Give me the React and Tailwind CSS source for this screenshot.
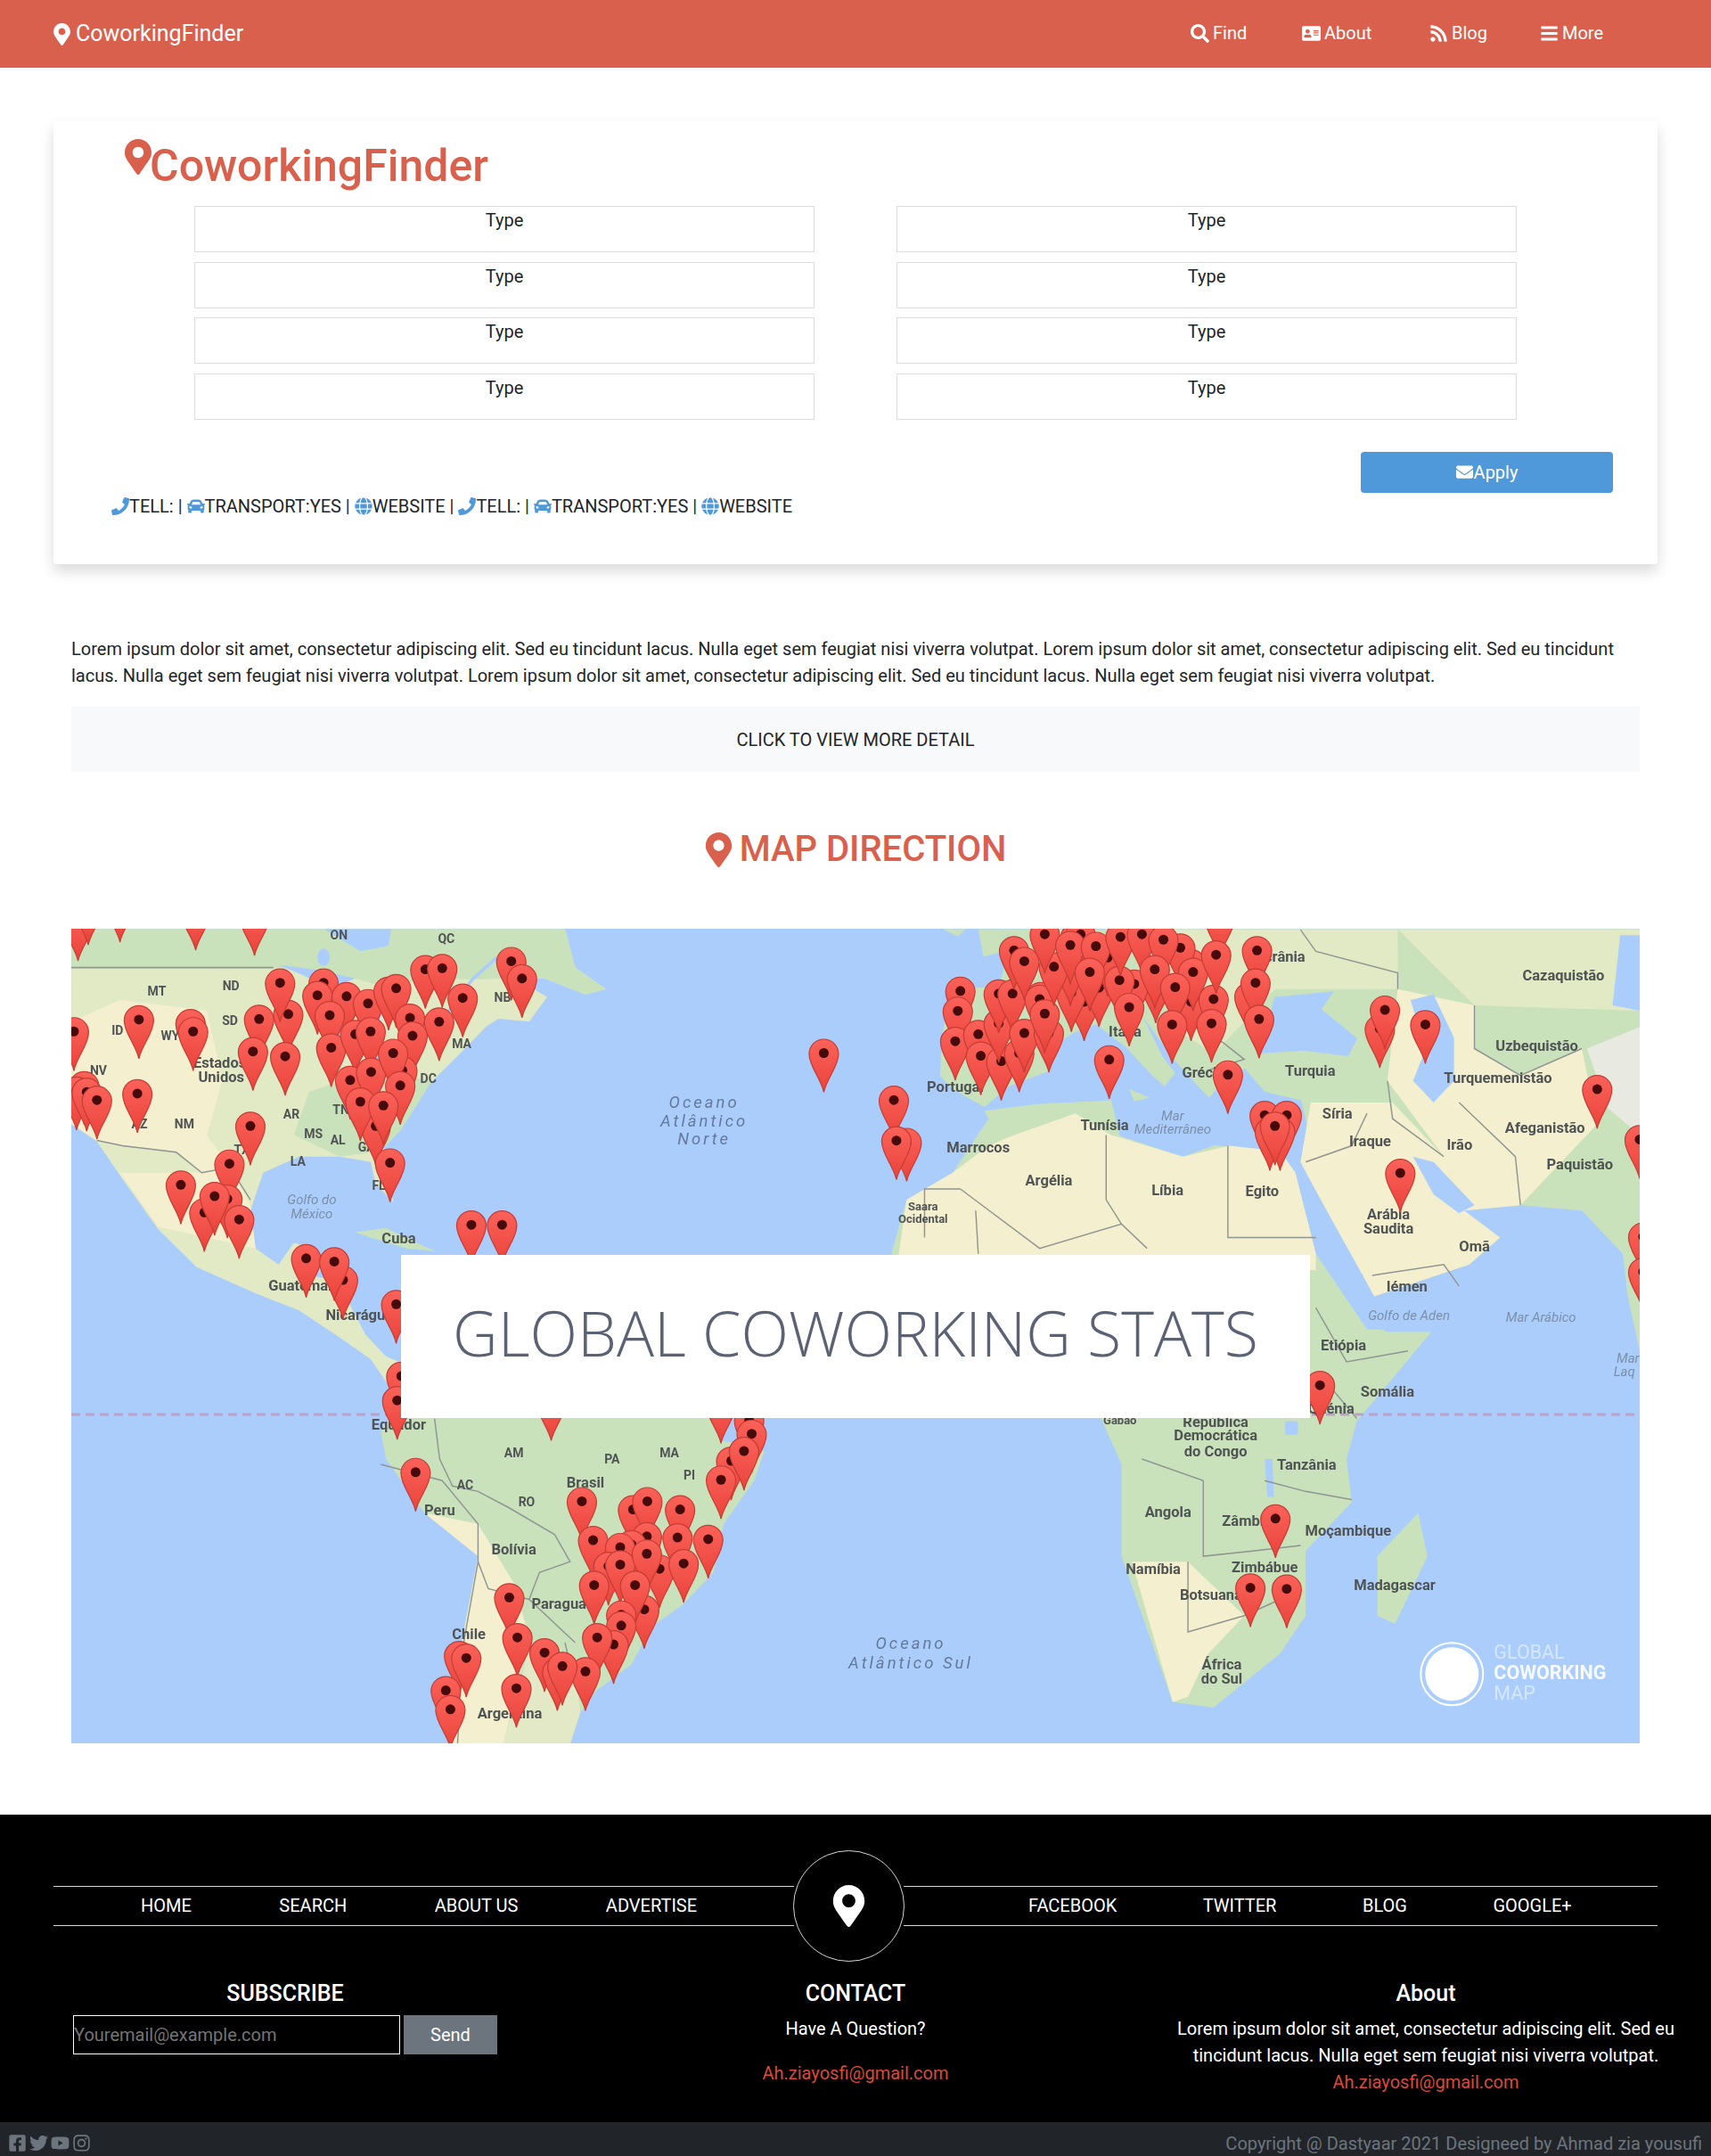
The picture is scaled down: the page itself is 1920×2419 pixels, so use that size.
import {
  FaMapMarkerAlt,
  FaSearch,
  FaAddressCard,
  FaRss,
  FaBars,
  FaEnvelope,
  FaPhone,
  FaCar,
  FaGlobe,
  FaFacebookSquare,
  FaTwitter,
  FaYoutube,
  FaInstagram,
} from "react-icons/fa";

const LOREM =
  "Lorem ipsum dolor sit amet, consectetur adipiscing elit. Sed eu tincidunt lacus. Nulla eget sem feugiat nisi viverra volutpat.";

// map drawing is authored in crop coordinates, two halves
const SX = 0.574;
const SY = 0.606;
const lx = (z) => z * SX - 20;
const rx = (z) => z * SX + 880;
const my = (z) => z * SY - 11;

const WATER = "#abcdfc";
const GREEN = "#c9e2bb";
const PALE = "#e1eac4";
const TAN = "#f4efcf";

const leftPins = [
  [48, 7], [68, -23], [130, -28], [278, -13], [393, -3], [167, 188], [268, 195], [273, 210], [40, 210], [402, 187],
  [459, 178], [443, 120], [528, 120], [516, 143], [573, 145], [540, 180], [615, 158], [655, 135], [670, 130], [697, 185],
  [702, 218], [754, 192], [800, 148], [727, 95], [760, 93], [895, 80], [916, 112], [390, 247], [453, 256], [543, 240],
  [590, 215], [620, 210], [580, 300], [621, 285], [682, 282], [664, 250], [630, 385], [600, 340], [678, 310], [645, 347],
  [60, 310], [45, 320], [65, 322], [85, 337], [164, 325], [385, 385], [658, 453], [344, 455], [249, 494], [295, 545],
  [340, 520], [315, 515], [363, 558], [494, 630], [566, 670], [549, 636], [670, 715], [680, 848], [672, 893], [817, 568],
  [877, 568], [973, 895], [1305, 900], [1360, 930], [1365, 955], [1325, 1005], [1350, 987], [1305, 1040], [708, 1026],
  [1033, 1080], [1133, 1095], [1161, 1080], [1225, 1095], [1055, 1152], [1220, 1147], [1280, 1150], [1160, 1145],
  [1130, 1160], [1108, 1165], [1085, 1200], [1108, 1197], [1185, 1205], [1160, 1177], [1232, 1195], [1155, 1280],
  [1137, 1235], [1057, 1235], [1110, 1290], [1110, 1310], [891, 1258], [1095, 1345], [1063, 1332], [907, 1332],
  [960, 1360], [1040, 1395], [985, 1395], [995, 1385], [793, 1365], [807, 1370], [767, 1430], [776, 1465], [905, 1426],
  [1506, 250],
];

const rightPins = [
  [656, 155], [587, 122], [447, 155], [476, 129], [545, 122], [362, 145], [430, 35], [493, 73], [656, 84],
  [75, 337], [100, 415], [80, 412], [205, 135], [200, 172], [195, 228], [240, 215], [245, 255], [285, 265], [280, 195],
  [280, 140], [307, 140], [320, 250], [330, 213], [378, 213], [360, 150], [370, 177], [422, 138], [310, 60], [330, 80],
  [420, 90], [388, 90], [370, 30], [440, 30], [420, 50], [470, 52], [458, 100], [516, 115], [518, 35], [560, 30],
  [635, 55], [602, 40], [585, 95], [660, 100], [625, 128], [770, 145], [700, 150], [712, 0], [705, 68], [785, 60],
  [782, 120], [535, 165], [619, 197], [696, 195], [789, 187], [496, 262], [728, 290], [800, 365], [843, 365], [810, 395],
  [830, 395], [820, 385], [1025, 205], [1035, 170], [1114, 197], [1065, 472], [1450, 317], [1533, 410], [1540, 590],
  [1540, 655], [908, 865], [821, 1112], [772, 1240], [843, 1242],
];

const leftLabels = [
  ["ON", 558, 38], ["QC", 768, 44], ["MT", 202, 142], ["ND", 347, 132], ["SD", 345, 197], ["ID", 125, 215], ["WY", 228, 225],
  ["Estados", 325, 275], ["Unidos", 328, 302], ["NV", 88, 288], ["AZ", 168, 388], ["NM", 256, 388], ["AR", 465, 370],
  ["MS", 508, 406], ["AL", 556, 417], ["GA", 612, 430], ["LA", 478, 457], ["TX", 368, 435], ["TN", 562, 362], ["DC", 733, 304],
  ["FL", 636, 502], ["MA", 798, 240], ["NB", 878, 154], ["Cuba", 675, 600], ["Guatemala", 490, 688], ["Nicarágua", 598, 742],
  ["Equador", 675, 946], ["Peru", 755, 1104], ["Brasil", 1040, 1052], ["AM", 900, 996], ["PA", 1092, 1008], ["MA", 1204, 996],
  ["PI", 1243, 1038], ["AC", 805, 1056], ["RO", 925, 1088], ["Bolívia", 900, 1176], ["Paraguai", 992, 1278], ["Chile", 812, 1334],
  ["Argentina", 892, 1480],
];

const rightLabels = [
  ["Ucrânia", 830, 80], ["Cazaquistão", 1384, 114], ["Itália", 527, 218], ["Grécia", 680, 294], ["Turquia", 889, 290],
  ["Uzbequistão", 1332, 244], ["Turquemenistão", 1256, 303], ["Portugal", 195, 320], ["Tunísia", 487, 391], ["Síria", 942, 370],
  ["Iraque", 1006, 420], ["Irão", 1181, 427], ["Afeganistão", 1348, 396], ["Paquistão", 1416, 463], ["Marrocos", 240, 432],
  ["Argélia", 378, 494], ["Líbia", 610, 512], ["Egito", 795, 513], ["Arábia", 1042, 556], ["Saudita", 1042, 582], ["Omã", 1210, 615],
  ["Iémen", 1078, 690], ["Etiópia", 954, 798], ["Somália", 1040, 884], ["Quénia", 930, 916], ["República", 704, 941],
  ["Democrática", 704, 966], ["do Congo", 704, 995], ["Tanzânia", 882, 1020], ["Angola", 611, 1108], ["Zâmbia", 765, 1124],
  ["Moçambique", 963, 1142], ["Namíbia", 582, 1213], ["Zimbábue", 800, 1209], ["Botsuana", 695, 1260], ["Madagascar", 1054, 1243],
  ["África", 716, 1390], ["do Sul", 716, 1416],
];

const leftBorders = [
  "85,410 135,420 240,432 290,470 345,460 385,520",
  "745,925 755,1000 780,1050 830,1060 890,1090 980,1140 1010,1190 950,1210 930,1260 1020,1340",
  "640,1010 760,1040 830,1120 830,1190 850,1240 930,1260",
  "830,1190 800,1350 790,1527",
  "1000,1340 1020,1420",
];

const rightBorders = [
  "205,500 360,610 520,565 570,610",
  "135,590 135,500 205,500",
  "490,400 490,520 520,565",
  "728,420 728,590 900,590",
  "235,540 240,620",
  "870,20 900,60 1060,100 1060,130",
  "1210,160 1210,240 1300,290 1420,240",
  "1040,300 1050,370 1150,440",
  "1180,340 1290,440 1300,530",
  "1000,360 970,420 880,450",
  "1010,660 1150,640 1180,680",
  "560,1000 680,1040 680,1180 780,1170 870,1160",
  "650,1190 650,1320 760,1290 830,1260",
  "800,1040 880,1060 970,1075",
  "900,720 960,820 1080,800",
  "905,840 980,925",
  "650,190 720,230 760,260 690,280",
];

function Pin({ x, y }) {
  return (
    <g transform={`translate(${x} ${y})`}>
      <path d="M0 43C-3 28 -16.5 14 -16.5 0A16.5 16.5 0 0 1 16.5 0C16.5 14 3 28 0 43Z" fill="url(#pinFill)" stroke="#c43c34" strokeWidth="1.2" />
      <circle r="5.5" cx="0" cy="-1" fill="#470a0a" />
    </g>
  );
}

function WorldMap() {
  return (
    <svg viewBox="0 0 1760 914" className="block w-full h-[914px] blur-[0.7px]" fontFamily="Roboto, sans-serif">
      <defs>
        <linearGradient id="pinFill" x1="0" y1="0" x2="0" y2="1">
          <stop offset="0" stopColor="#fb6259" />
          <stop offset="1" stopColor="#e9433b" />
        </linearGradient>
      </defs>
      <rect width="1760" height="914" fill={WATER} />

      <g transform={`translate(-20 -11) scale(${SX} ${SY})`}>
        {/* north america */}
        <polygon
          fill={PALE}
          points="35,19 1000,19 1020,90 1080,130 1040,140 960,110 905,110 965,145 930,190 870,185 845,200 790,254 719,320 674,393 640,430 665,525 630,490 620,450 560,440 480,440 410,470 385,540 395,610 440,640 470,600 510,610 500,660 555,670 610,770 650,810 700,830 700,925 620,815 560,775 480,725 400,695 280,645 205,575 130,475 85,412 35,380"
        />
        <polygon fill={GREEN} points="35,19 1000,19 1020,90 1080,130 1040,140 960,110 905,110 820,112 720,110 660,130 590,110 430,90 35,90" />
        <polygon fill={GREEN} points="560,440 640,430 680,390 740,300 620,280 500,320 470,400" />
        <polygon fill={TAN} points="35,190 130,150 300,170 330,300 300,400 345,460 290,470 240,432 135,420 85,410 35,380" />
        <polygon fill={TAN} points="290,470 345,460 385,530 395,610 300,590 205,570 130,470" />
        <polygon fill={WATER} points="85,420 195,575 130,480 95,430" />
        <polygon fill={GREEN} points="590,580 650,572 745,615 690,610 620,590" />
        <polygon fill={GREEN} points="760,625 830,640 850,650 770,640" />
        {/* lakes and hudson */}
        <polygon fill={WATER} points="530,19 660,19 655,50 600,60" />
        <polygon fill={WATER} points="440,85 520,95 590,110 540,130 490,105" />
        <polygon fill={WATER} points="545,150 570,160 565,240 545,230" />
        <polygon fill={WATER} points="590,150 640,180 630,230 600,210" />
        <polygon fill={WATER} points="610,250 680,222 690,232 630,265" />
        <polyline fill="none" stroke={WATER} strokeWidth="6" points="745,205 819,112 866,72" />
        <ellipse cx="528" cy="71" rx="12" ry="16" fill={WATER} />
        <line x1="35" y1="90" x2="430" y2="90" stroke="#8f9590" strokeWidth="3" />
        {/* south america */}
        <polygon fill={GREEN} points="700,880 1000,880 1290,925 1305,965 1390,985 1370,1040 1310,1120 1290,1210 1230,1270 1170,1310 1130,1380 1060,1430 1030,1470 1010,1527 770,1527 790,1380 830,1180 725,1100 650,1000 640,950 680,890" />
        <polygon fill={TAN} points="725,1100 830,1180 790,1380 770,1527 880,1527 930,1330 900,1230 830,1120" />
        <polygon fill="#e3e9c6" points="880,1527 930,1350 1020,1400 1030,1470 1010,1527" />
        {leftBorders.map((p) => (
          <polyline key={p} points={p} fill="none" stroke="#8f9590" strokeWidth="2.5" />
        ))}
      </g>

      <g transform={`translate(880 -11) scale(${SX} ${SY})`}>
        {/* eurasia */}
        <polygon
          fill={GREEN}
          points="300,19 291,89 280,125 190,130 170,210 165,290 190,315 252,348 300,310 377,282 370,245 424,212 470,195 528,237 580,290 604,310 625,285 600,255 563,183 622,260 660,300 691,331 720,300 761,277 800,320 871,336 888,402 870,450 1010,700 1200,640 1260,590 1190,540 1300,530 1420,540 1500,620 1510,700 1533,800 1533,19"
        />
        <polygon fill={PALE} points="620,19 1060,19 1060,130 960,130 820,130 700,250 620,200" />
        <polygon fill={PALE} points="1060,19 1533,19 1533,170 1210,160" />
        <polygon fill={TAN} points="890,340 1050,340 1150,440 1190,540 1260,590 1200,640 1010,700 870,450" />
        <polygon fill={TAN} points="1040,300 1060,130 1210,160 1210,240 1300,290 1420,240 1450,380 1300,530 1190,540 1150,440" />
        <polygon fill="#e8e9e0" points="1430,240 1533,200 1533,400 1470,350" />
        <polygon fill={GREEN} points="535,315 575,331 545,338" />
        <polygon fill={GREEN} points="240,19 300,19 290,60 250,70" />
        <polygon fill={GREEN} points="170,19 215,19 200,32" />
        {/* africa */}
        <polygon fill={GREEN} points="252,355 354,343 500,336 517,402 640,440 702,419 830,430 860,470 900,620 1000,760 1130,760 980,930 960,1000 970,1080 880,1170 880,1290 830,1360 700,1460 620,1450 520,1180 520,1010 480,925 70,620 100,520 190,470 260,370" />
        <polygon fill={TAN} points="310,400 430,360 500,400 640,440 730,420 830,430 860,470 900,620 900,650 80,650 100,520 190,470 260,420" />
        <polygon fill={TAN} points="540,1190 650,1190 760,1290 690,1360 650,1440 620,1450" />
        <polygon fill={GREEN} points="1100,1100 1118,1180 1055,1305 1020,1290 1020,1180" />
        {/* inland seas */}
        <polygon fill={WATER} points="789,249 819,145 935,134 911,167 981,221 963,254 876,244" />
        <polygon fill={WATER} points="1085,150 1130,140 1170,220 1170,300 1130,340 1090,300 1115,240" />
        <polygon fill={WATER} points="860,470 880,470 1015,700 1005,710" />
        <polygon fill={WATER} points="1090,440 1130,450 1210,530 1180,545 1130,510" />
        <polygon fill={WATER} points="1010,750 1100,730 1180,730 1130,765 1040,765" />
        <polygon fill={WATER} points="1495,30 1533,30 1533,170 1480,160" />
        <polygon fill={WATER} points="800,1000 815,1000 818,1070 805,1070" />
        <polygon fill={WATER} points="840,930 865,930 865,955 840,955" />
        {rightBorders.map((p) => (
          <polyline key={p} points={p} fill="none" stroke="#8f9590" strokeWidth="2.5" />
        ))}
      </g>

      <line x1="0" y1="545" x2="1760" y2="545" stroke="#b9a3c4" strokeWidth="3" strokeDasharray="10 6" />

      <g fill="#4f5353" fontSize="16.5" fontWeight="700" textAnchor="middle">
        {leftLabels.map(([t, x, y]) => (
          <text key={t + x} x={lx(x)} y={my(y)} fontSize={t.length < 3 ? 14 : 16.5}>{t}</text>
        ))}
        {rightLabels.map(([t, x, y]) => (
          <text key={t + x} x={rx(x)} y={my(y)}>{t}</text>
        ))}
        <text x={rx(132)} y={my(540)} fontSize="13">Saara</text>
        <text x={rx(132)} y={my(563)} fontSize="13">Ocidental</text>
        <text x={rx(517)} y={my(935)} fontSize="13">Gabão</text>
      </g>
      <g fill="#64799a" fontSize="18.5" fontStyle="italic" letterSpacing="3" textAnchor="middle">
        <text x={lx(1272)} y={my(350)}>Oceano</text>
        <text x={lx(1272)} y={my(384)}>Atlântico</text>
        <text x={lx(1272)} y={my(418)}>Norte</text>
        <text x={rx(108)} y={my(1352)}>Oceano</text>
        <text x={rx(108)} y={my(1388)}>Atlântico Sul</text>
      </g>
      <g fill="#7c8fa8" fontSize="15" fontStyle="italic" textAnchor="middle">
        <text x={lx(505)} y={my(528)}>Golfo do</text>
        <text x={lx(505)} y={my(554)}>México</text>
        <text x={rx(620)} y={my(373)}>Mar</text>
        <text x={rx(620)} y={my(398)}>Mediterrâneo</text>
        <text x={rx(1082)} y={my(742)}>Golfo de Aden</text>
        <text x={rx(1340)} y={my(746)}>Mar Arábico</text>
        <text x={rx(1510)} y={my(822)}>Mar</text>
        <text x={rx(1503)} y={my(846)}>Laq</text>
      </g>

      {leftPins.map(([x, y]) => (
        <Pin key={`l${x}-${y}`} x={lx(x)} y={my(y)} />
      ))}
      {rightPins.map(([x, y]) => (
        <Pin key={`r${x}-${y}`} x={rx(x)} y={my(y)} />
      ))}

      <circle cx={rx(1166)} cy={my(1398)} r="30" fill="#fff" />
      <circle cx={rx(1166)} cy={my(1398)} r="35" fill="none" stroke="#fff" strokeWidth="2" />
      <g fontSize="21.5" fill="#fff">
        <text x={rx(1248)} y={my(1370)} opacity="0.5">GLOBAL</text>
        <text x={rx(1248)} y={my(1408)} fontWeight="700" opacity="0.9">COWORKING</text>
        <text x={rx(1248)} y={my(1445)} opacity="0.5">MAP</text>
      </g>
    </svg>
  );
}

function Info() {
  return (
    <>
      <FaPhone className="text-[#4f98d9] text-[20px]" />
      <span>TELL: |&nbsp;</span>
      <FaCar className="text-[#4f98d9] text-[20px]" />
      <span>TRANSPORT:YES |&nbsp;</span>
      <FaGlobe className="text-[#4f98d9] text-[20px]" />
      <span>WEBSITE</span>
    </>
  );
}

export default function App() {
  const nav = [
    [FaSearch, "Find", "w-[63px]"],
    [FaAddressCard, "About", "w-[81px]"],
    [FaRss, "Blog", "w-[62px]"],
    [FaBars, "More", "w-[69px]"],
  ];
  return (
    <div className="font-['Roboto',sans-serif] text-[#212529] text-[20px] bg-white w-[1920px] h-[2419px] overflow-hidden">
      <nav className="h-[76px] bg-[#d9604c] text-white flex items-center justify-between pl-[57px] pr-[123px]">
        <a className="flex items-center gap-[3px] text-[25px]">
          <FaMapMarkerAlt className="text-[25px]" />
          CoworkingFinder
        </a>
        <ul className="flex gap-[62px] pb-[2px]">
          {nav.map(([Icon, label, w]) => (
            <li key={label} className={`flex items-center gap-[4px] whitespace-nowrap ${w}`}>
              <Icon className="text-[21px] shrink-0" />
              {label}
            </li>
          ))}
        </ul>
      </nav>

      <main className="px-[60px] pt-[60px]">
        <section className="h-[497px] rounded bg-white shadow-[0_8px_16px_rgba(0,0,0,0.15)] pl-[80px] pt-[20px] relative">
          <h1 className="flex items-start h-[75px] text-[#d9604c] text-[50px] font-medium leading-none">
            <FaMapMarkerAlt className="text-[40px] shrink-0 -ml-[5px] -mr-[7px]" />
            <span className="mt-[5px]">CoworkingFinder</span>
          </h1>
          <div className="grid grid-cols-[696px_696px] gap-x-[92px] gap-y-[10.5px] ml-[78px]">
            {Array.from({ length: 8 }).map((_, i) => (
              <div key={i} className="h-[52px] border border-[#dcdcdc] text-center leading-[30px]">
                Type
              </div>
            ))}
          </div>
          <div className="flex justify-end mt-[36px] pr-[50px]">
            <button className="w-[283px] h-[46px] rounded bg-[#4f98d9] text-white flex items-center justify-center gap-[1px]">
              <FaEnvelope className="text-[19px]" />
              Apply
            </button>
          </div>
          <div className="flex items-center h-[30px] ml-[-15px] whitespace-nowrap">
            <Info />
            <span>&nbsp;|&nbsp;</span>
            <Info />
          </div>
        </section>

        <div className="px-[20px]">
          <p className="mt-[80px] leading-[30px]">
            {LOREM} {LOREM} {LOREM}
          </p>
          <div className="mt-[20px] h-[73px] bg-[#f8f9fa] flex items-center justify-center">CLICK TO VIEW MORE DETAIL</div>
          <h2 className="mt-[61px] h-[52px] flex items-center justify-center gap-[4px] pr-[4px] text-[#d9604c] text-[40px] font-medium uppercase">
            <FaMapMarkerAlt className="text-[39px]" />
            Map Direction
          </h2>
          <div className="relative mt-[63px]">
            <WorldMap />
            <div className="absolute left-[370px] top-[366px] w-[1020px] h-[183px] bg-white flex items-center justify-center font-['Open_Sans',sans-serif] font-light text-[70px] text-[#5a6274] whitespace-nowrap pb-[8px]">
              GLOBAL COWORKING STATS
            </div>
          </div>
        </div>
      </main>

      <footer className="mt-[80px] bg-black text-white relative">
        <div className="h-[345px] px-[60px] pt-[80px]">
          <div className="flex items-center h-[44px] relative">
            <ul className="w-[831px] h-[45px] border-y border-[#d5d5d5] flex items-center gap-[98.5px] pl-[98px]">
              <li>HOME</li>
              <li>SEARCH</li>
              <li>ABOUT US</li>
              <li>ADVERTISE</li>
            </ul>
            <ul className="ml-[123px] w-[846px] h-[45px] border-y border-[#d5d5d5] flex items-center gap-[96.5px] pl-[140px]">
              <li>FACEBOOK</li>
              <li>TWITTER</li>
              <li>BLOG</li>
              <li>GOOGLE+</li>
            </ul>
            <div className="absolute left-[830px] top-[-40px] w-[125px] h-[125px] rounded-full border border-[#d5d5d5] bg-black flex items-center justify-center">
              <FaMapMarkerAlt className="text-[47px] text-white" />
            </div>
          </div>
          <div className="grid grid-cols-[600px_600px_640px] mt-[59px]">
            <div>
              <h3 className="text-center w-[520px] text-[25px] font-medium leading-[36px]">SUBSCRIBE</h3>
              <div className="flex gap-[4px] mt-[6px] ml-[22px]">
                <input
                  readOnly
                  placeholder="Youremail@example.com"
                  className="w-[367px] h-[44px] border border-white bg-black placeholder:text-[#757575] text-[20px] outline-none"
                />
                <button className="w-[105px] h-[44px] bg-[#6c757d] text-white">Send</button>
              </div>
            </div>
            <div className="text-center">
              <h3 className="text-[25px] font-medium leading-[36px]">CONTACT</h3>
              <p className="mt-[6px] leading-[30px]">Have A Question?</p>
              <p className="mt-[20px] leading-[30px] text-[#dc4a38]">Ah.ziayosfi@gmail.com</p>
            </div>
            <div className="text-center pl-[40px]">
              <h3 className="text-[25px] font-medium leading-[36px]">About</h3>
              <p className="mt-[6px] leading-[30px]">
                Lorem ipsum dolor sit amet, consectetur adipiscing elit. Sed eu
                <br />
                tincidunt lacus. Nulla eget sem feugiat nisi viverra volutpat.
              </p>
              <p className="leading-[30px] text-[#dc4a38]">Ah.ziayosfi@gmail.com</p>
            </div>
          </div>
        </div>
        <div className="h-[38px] bg-[#212529] flex items-center justify-between pl-[9px] pr-[10px] pt-[9px] text-[#6c757d] text-[20px]">
          <div className="flex items-center gap-[3px] text-[21px]">
            <FaFacebookSquare />
            <FaTwitter />
            <FaYoutube />
            <FaInstagram />
          </div>
          <span>Copyright @ Dastyaar 2021 Designeed by Ahmad zia yousufi</span>
        </div>
      </footer>
    </div>
  );
}
